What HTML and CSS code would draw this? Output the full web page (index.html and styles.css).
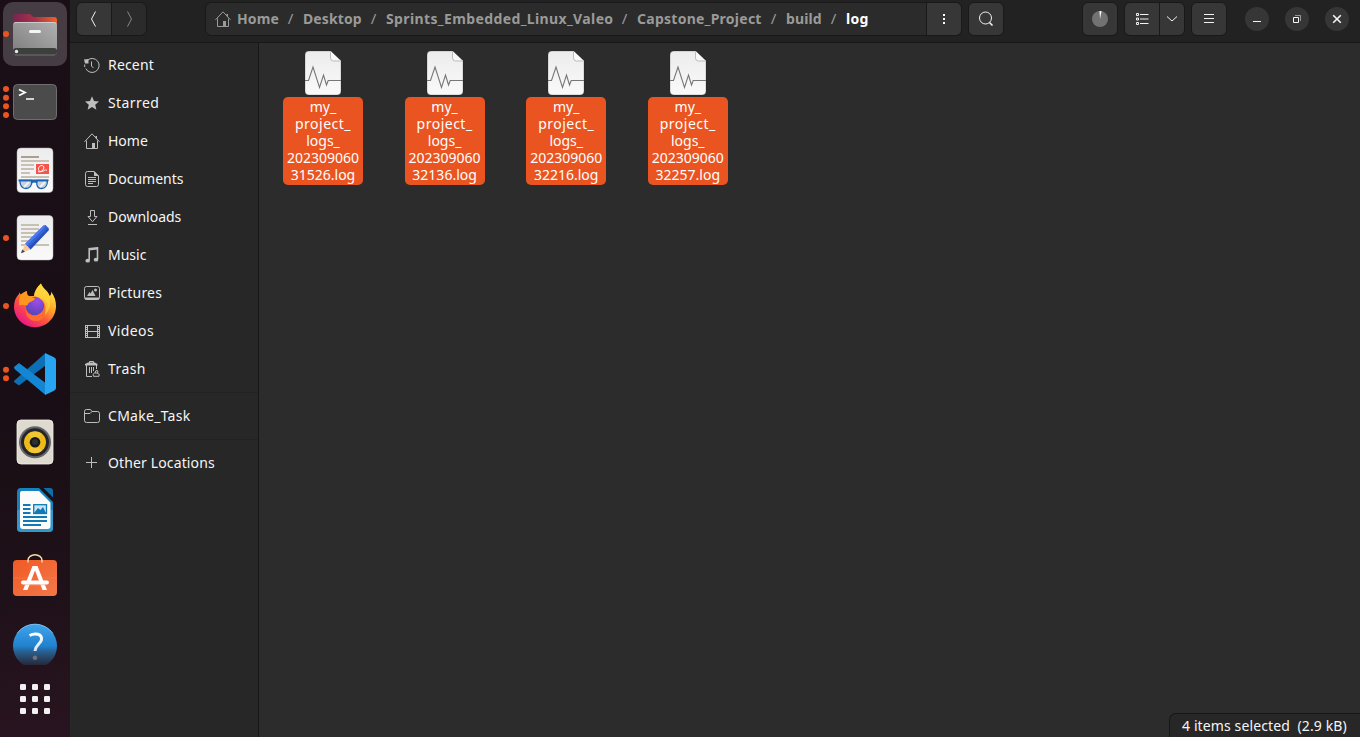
FILE: index.html
```html
<!DOCTYPE html>
<html lang="en">
<head>
<meta charset="utf-8">
<title>log</title>
<link rel="stylesheet" href="styles.css">
</head>
<body>
<svg width="0" height="0" class="defs">
  <defs>
    <linearGradient id="folder" x1="0" x2="1"><stop offset="0" stop-color="#7a2350"/><stop offset=".5" stop-color="#a8324a"/><stop offset="1" stop-color="#f0622a"/></linearGradient>
    <linearGradient id="drawer" x1="0" x2="1" y1="1" y2="0"><stop offset="0" stop-color="#7d7d7d"/><stop offset="1" stop-color="#b0b0b0"/></linearGradient>
    <linearGradient id="paper" x1="0" x2="0" y1="0" y2="1"><stop offset="0" stop-color="#ececec"/><stop offset="1" stop-color="#fafafa"/></linearGradient>
    <linearGradient id="fox" x1=".85" x2=".2" y1=".1" y2=".95"><stop offset="0" stop-color="#ffe93f"/><stop offset=".35" stop-color="#ffa42b"/><stop offset=".6" stop-color="#ff5a36"/><stop offset="1" stop-color="#e8128d"/></linearGradient>
    <radialGradient id="globe" cx=".6" cy=".25" r=".8"><stop offset="0" stop-color="#a14bea"/><stop offset="1" stop-color="#5045b5"/></radialGradient>
    <linearGradient id="bag" x1="0" x2="1" y1="0" y2="1"><stop offset="0" stop-color="#f05a24"/><stop offset="1" stop-color="#f3784a"/></linearGradient>
    <linearGradient id="help" x1="0" x2="0" y1="0" y2="1"><stop offset="0" stop-color="#3fa3ec"/><stop offset=".5" stop-color="#2182d0"/><stop offset=".62" stop-color="#286293"/><stop offset=".92" stop-color="#262a3b"/></linearGradient>
    <linearGradient id="mark" x1="0" x2="0" y1="0" y2="1"><stop offset="0" stop-color="#fff"/><stop offset="1" stop-color="#d5e4f0"/></linearGradient>
    <symbol id="logfile" viewBox="0 0 38 46">
      <path d="M5 1h21.500l10.500 10V41a4 4 0 0 1-4 4H5a4 4 0 0 1-4-4V5a4 4 0 0 1 4-4z" fill="url(#paper)" stroke="#1e1e1e" stroke-opacity=".4" stroke-width=".6"/>
      <path d="M26.500 1v7a3 3 0 0 0 3 3H37z" fill="#f8f8f8"/>
      <path d="M26.500 1.500V8a3 3 0 0 0 3 3h7" fill="none" stroke="#bcbcbc" stroke-width="1"/>
      <path d="M1 30.500h3.500L9 17l6.500 20.500 4-12.500 3 10 1.700-4.500H37" fill="none" stroke="#777" stroke-width="1.100"/>
    </symbol>
    <symbol id="house" viewBox="0 0 16 16">
      <path d="M.5 8.800 8 .8l7.500 8M2.500 7.500v8H13.500v-8" fill="none" stroke="currentColor" stroke-width="1"/>
      <path d="M8 10h3v5.500H8zM11.500 3H13v3.500L11.500 5z" fill="currentColor"/>
    </symbol>
  </defs>
</svg>
<div class="desktop">
  <nav class="dock">
    <div class="dock-list">
      <svg class="app" viewBox="0 0 70 68">
        <rect x="3" y="2" width="64" height="64" rx="10" fill="#463c43"/>
        <path d="M13 27V17a3 3 0 0 1 3-3h14l3.500 3H54a3 3 0 0 1 3 3v9z" fill="url(#folder)"/>
        <rect x="13" y="22" width="44" height="33" rx="3" fill="url(#drawer)"/>
        <path d="M14 23.500q.8-1 2-1h38q1.200 0 2 1" fill="none" stroke="#d5d5d5" stroke-width=".8"/>
        <rect x="13" y="48" width="44" height="7" rx="3" fill="#3c3f3d"/>
        <path d="M15 55h40" stroke="#8a8a8a" stroke-width=".7"/>
        <rect x="29" y="30" width="12" height="3" rx="1.500" fill="#f5f5f5"/>
        <circle cx="16.500" cy="51.500" r="1.700" fill="#e8e8e8"/>
        <circle cx="6" cy="34" r="3" fill="#e95420"/>
      </svg>
      <svg class="app" viewBox="0 0 70 68">
        <rect x="13.500" y="16.500" width="43" height="35" rx="4" fill="#4b4b4b" stroke="#6e6e6e"/>
        <path d="m19 21.500 6 3-6 3" fill="none" stroke="#fff" stroke-width="1.800"/><path d="M26 31h8" stroke="#fff" stroke-width="1.500"/>
        <g fill="#e95420"><circle cx="6" cy="21" r="3"/><circle cx="6" cy="29.700" r="3"/><circle cx="6" cy="38.300" r="3"/><circle cx="6" cy="47" r="3"/></g>
      </svg>
      <svg class="app" viewBox="0 0 70 68">
        <rect x="17" y="12" width="36" height="44.500" rx="4" fill="url(#paper)" stroke="#aaa" stroke-width=".5"/>
        <path d="M21 21h18" stroke="#aaa08c" stroke-width="2"/>
        <path d="M21 25h28M21 29h13M21 33h13M21 37h9M21 41h28" stroke="#c6c1b4" stroke-width="2"/>
        <rect x="36" y="28" width="13" height="10" fill="#f4544c"/>
        <path d="M38 35.500c5 2 8-6 4-6s-5 6-1 6 4-3 6-1" fill="none" stroke="#fff" stroke-width="1"/>
        <path d="M19.800 44.500h11.700c1 5-2 8-5.500 8s-6-3-6.200-8zM37 44.500h10.500c0 5-2.500 8-6 8S36 50 37 44.500z" fill="#b9c4d0" fill-opacity=".75" stroke="#1b63b5" stroke-width="1.300"/>
        <path d="m24 51 5-5M40 51l5-5" stroke="#eef2f6" stroke-width="2"/>
        <path d="M18.500 44.300h30M31.500 46.500q3-2 5.500 0" fill="none" stroke="#1b63b5" stroke-width="1.800"/>
      </svg>
      <svg class="app" viewBox="0 0 70 68">
        <rect x="17" y="11.500" width="36" height="44.500" rx="4" fill="url(#paper)" stroke="#bbb" stroke-width=".5"/>
        <path d="M21 21h18M21 25h18M21 29h17M21 33h13M21 37h9M21 41h28" stroke="#c6c1b4" stroke-width="1.800"/>
        <path d="m25 40 18.500-18.500 2-.5 3.500 3.500-.5 2L30.500 45.500z" fill="#3463d8"/>
        <path d="m25 40 18.500-18.500 1.500 1.500-18.200 18.700z" fill="#4c7af0"/>
        <path d="m28.500 43.500 19-19 1.200 1.500-18.200 19.500z" fill="#2750b8"/>
        <path d="m21.500 48.500 3.500-8.500 5.500 5.500z" fill="#fac999"/><path d="m21 49.200 1.300-3.700 2.700 2.300z" fill="#444"/>
        <circle cx="6" cy="34" r="3" fill="#e95420"/>
      </svg>
      <svg class="app" viewBox="0 0 70 68">
        <path d="M41 11.500c1 4.500 7 7 8.500 12.500 1.500-1 2-2.500 1.500-4.500C54.500 24 56 29 56 34c0 12-9.500 21.200-21 21.200S14 46 14 34.500c0-5.500 2-9.500 5-12.500l.5-2c.3 1.500 1 2.500 2 3 1.500-1.500 3-3 5.500-4-.3 2.500.5 4.500 2 5h5c.5-5 3-9 7-12.500z" fill="url(#fox)"/>
        <circle cx="35" cy="34" r="9.300" fill="url(#globe)"/>
        <path d="M20.500 22.500c2-1.500 4-2.700 6-3.300-.3 3 .8 4.500 2.500 5l6 2c0 3-7 3.500-7 6 0 1-2 2-5 .5l-4 .5c0-4 0-7 1.500-10.700z" fill="#ff961d"/>
        <path d="M26 34c-1 7 5 11 11 9 5-2 8-6 7-11-1-3-2-4-5-5 4-1 9 2 9.500 8S43 49 36 49s-12-6-10-15z" fill="#ff6c2f"/>
        <path d="M41 11.500c1 4.500 7 7 8.500 12.500 2 7 0 15-4.500 19 1-5 1-12-3-15-3-3-7-4.500-8-4 .5-5 3-9 7-12.500z" fill="#ffd83c" fill-opacity=".75"/>
        <circle cx="6" cy="34" r="3" fill="#e95420"/>
      </svg>
      <svg class="app" viewBox="0 0 70 68">
        <path d="m14 42 5 3.500 26.500-20V13L14.500 40.500z" fill="#0d6fb4"/>
        <path d="m14 27 5-4 26.500 20V55L14.500 29z" fill="#1487d4"/>
        <path d="m45 13 8.500 4q2.500 1 2.500 3v28q0 2-2.500 3L45 55z" fill="#27a4f2"/>
        <g fill="#e95420"><circle cx="6" cy="29.700" r="3"/><circle cx="6" cy="38.300" r="3"/></g>
      </svg>
      <svg class="app" viewBox="0 0 70 68">
        <rect x="17" y="12" width="36" height="44" rx="4" fill="#dedacf" stroke="#f3f1eb" stroke-width=".8"/>
        <circle cx="35" cy="34.300" r="16" fill="#66666b"/><circle cx="35" cy="34.300" r="14" fill="#25252c"/>
        <circle cx="35" cy="34.300" r="11" fill="#ecbb18"/><path d="M35 34.300 28 26a11 11 0 0 1 14 0zM35 34.300l-7 8.500a11 11 0 0 0 14 0z" fill="#f6ce4a" fill-opacity=".6"/>
        <circle cx="35" cy="34.300" r="5.300" fill="#17181b"/><circle cx="35" cy="34" r="3" fill="#2d3033"/>
      </svg>
      <svg class="app" viewBox="0 0 70 68">
        <path d="M21 12h18l14 14v26a4 4 0 0 1-4 4H21a4 4 0 0 1-4-4V16a4 4 0 0 1 4-4z" fill="#1581bd"/>
        <path d="M17 34h36v18a4 4 0 0 1-4 4H21a4 4 0 0 1-4-4z" fill="#3197cc"/>
        <path d="M22 15h17l11.500 11.500V50a3 3 0 0 1-3 3H23a3 3 0 0 1-3-3V17a2 2 0 0 1 2-2z" fill="#fbfbfb"/>
        <path d="M43.500 12H50q3 0 3 3v6.500z" fill="#116ca4"/>
        <path d="M23 29h7.500M23 33h7.500M23 37h7.500M23 41h24M23 45h24M23 49h18" stroke="#1279b5" stroke-width="1.800"/>
        <rect x="33.700" y="28.700" width="12.800" height="8.800" fill="#c7e6f6" stroke="#1279b5" stroke-width="1.300"/>
        <path d="m34 37 4-5 2.500 2 2.500-3 3 6z" fill="#1279b5"/>
      </svg>
      <svg class="app" viewBox="0 0 70 68">
        <rect x="13" y="16" width="44" height="36" rx="4" fill="url(#bag)"/>
        <path d="M13.500 34H56.500" stroke="#f58152" stroke-width=".6"/>
        <path d="M28 18.500V16.500a7 5.800 0 0 1 14 0v2" fill="none" stroke="#f4dba5" stroke-width="1.500"/>
        <path d="M32.500 22h5L47 46h-4.500L35 26.500 27.500 46H23z" fill="#fff"/>
        <path d="M23 38.500h24" stroke="#fff" stroke-width="4" stroke-linecap="round"/>
        <path d="M25 40.800h20" stroke="#f6b49a" stroke-width=".7"/>
      </svg>
      <svg class="app" viewBox="0 0 70 68">
        <circle cx="35" cy="34" r="22" fill="url(#help)"/>
        <path d="M17 21.500a22 22 0 0 1 36 0" fill="none" stroke="#8bd0ff" stroke-width=".8"/>
        <path d="M29.500 23.500c6-3 12.500-1.500 12 4-.5 4.500-6 5-6.500 11.500" fill="none" stroke="url(#mark)" stroke-width="3"/>
        <circle cx="35" cy="45.700" r="2.300" fill="#746f7c"/>
      </svg>
    </div>
    <svg class="grid-button" viewBox="0 0 31 31" fill="#f2f0f0">
      <g id="gridrow"><rect width="6" height="6" rx="1.300"/><rect x="12" width="6" height="6" rx="1.300"/><rect x="24" width="6" height="6" rx="1.300"/></g>
      <use href="#gridrow" y="12"/><use href="#gridrow" y="24"/>
    </svg>
  </nav>

  <main class="window">
    <header class="header">
      <div class="group nav-group">
        <span class="btn"><svg width="16" height="18" viewBox="0 0 16 18"><path d="M9.500 1.500 5.500 9l4 7.500" class="line"/></svg></span>
        <span class="btn off"><svg width="16" height="18" viewBox="0 0 16 18"><path d="m6.500 1.500 4 7.500-4 7.500" class="line"/></svg></span>
      </div>
      <div class="group path-group">
        <div class="path">
          <svg width="16" height="16" class="path-home"><use href="#house"/></svg>
          <span class="crumb c-home">Home</span><i>/</i>
          <span class="crumb c-desk">Desktop</span><i>/</i>
          <span class="crumb c-sprints">Sprints_Embedded_Linux_Valeo</span><i>/</i>
          <span class="crumb c-cap">Capstone_Project</span><i>/</i>
          <span class="crumb c-build">build</span><i>/</i>
          <span class="crumb current">log</span>
        </div>
        <span class="btn"><svg width="16" height="16" viewBox="0 0 16 16" fill="#fff"><path d="M7 3h2v2H7zM7 7h2v2H7zM7 11h2v2H7z"/></svg></span>
      </div>
      <div class="group"><span class="btn"><svg width="16" height="16" viewBox="0 0 16 16"><circle cx="7.500" cy="7" r="6" class="line"/><path d="m11.500 11.500 3 3" class="line thick"/></svg></span></div>
      <div class="group progress"><span class="btn"><svg width="16" height="16" viewBox="0 0 16 16"><circle cx="8" cy="8" r="8" fill="#727272"/><path d="M8 8 7.500 0h2z" fill="#fff"/></svg></span></div>
      <div class="group view">
        <span class="btn"><svg width="14" height="14" viewBox="0 0 14 14"><path d="M1.500 1.500h2v2h-2zM1.500 6h2v2h-2zM1.500 10.500h2v2h-2zM5 2.500h8.500M5 7h8.500M5 11.500h8.500" class="line"/></svg></span>
        <span class="btn narrow"><svg width="12" height="10" viewBox="0 0 12 10"><path d="m1 2.500 5 4.500 5-4.500" class="line"/></svg></span>
      </div>
      <div class="group menu"><span class="btn"><svg width="12" height="12" viewBox="0 0 12 12"><path d="M1 1.500h10M1 5.500h10M1 9.500h10" class="line"/></svg></span></div>
      <div class="controls">
        <span class="round"><svg width="10" height="10" viewBox="0 0 10 10"><path d="M1 7.500h8" class="line"/></svg></span>
        <span class="round"><svg width="10" height="10" viewBox="0 0 10 10"><path d="M3 1.500h5.500V7" class="line dim"/><path d="M1.500 3.500h5v5h-5z" class="line"/></svg></span>
        <span class="round"><svg width="10" height="10" viewBox="0 0 10 10"><path d="m1.200 1.200 7.600 7.600M8.800 1.200 1.200 8.800" class="line thick"/></svg></span>
      </div>
    </header>

    <div class="body">
      <aside class="sidebar">
        <a class="place"><svg viewBox="0 0 16 16"><path d="M3.500 3.200A7 7 0 1 1 1.800 11.500M.7 10V7.500M7.500 4.500V9L9.500 11" class="line"/><path d="M0 2.500 4.500 2v4.500H1z" fill="currentColor"/></svg><span class="w2">Recent</span></a>
        <a class="place"><svg viewBox="0 0 16 16"><path d="m8 1.200 2 4.800 5 .4-3.800 3.300 1.200 5L8 12l-4.400 2.700 1.200-5L1 6.400 6 6z" fill="currentColor"/></svg><span class="w4">Starred</span></a>
        <a class="place"><svg><use href="#house"/></svg><span>Home</span></a>
        <a class="place"><svg viewBox="0 0 16 16"><path d="M3.500.5H10l4.500 4.500v8.500a2 2 0 0 1-2 2h-9a2 2 0 0 1-2-2v-11a2 2 0 0 1 2-2zM4 6.500h8M4 8.500h8M4 10.500h8M4 12.500h5" class="line"/><path d="M10 0v5h5z" fill="currentColor"/></svg><span>Documents</span></a>
        <a class="place"><svg viewBox="0 0 16 16"><path d="M6.500 1.500h4v6H13l-4.500 5.200L4 7.500h2.500zM4 15.500h9" class="line"/></svg><span>Downloads</span></a>
        <a class="place"><svg viewBox="0 0 16 16"><path d="M5.200 13V1.700l8.300-.9V12M5 2.700l8.500-.9" class="line thick"/><ellipse cx="3.700" cy="13.700" rx="2.300" ry="1.900" fill="currentColor"/><ellipse cx="12" cy="12.700" rx="2.300" ry="1.900" fill="currentColor"/></svg><span>Music</span></a>
        <a class="place"><svg viewBox="0 0 16 16"><rect x=".5" y="1.500" width="15" height="13" rx="2" class="line"/><path d="M1 12.500h14v2H1zM3 11l2.500-4 1.200 1.500L8.500 5l3 6z" fill="currentColor"/><circle cx="11.500" cy="5" r="1.500" fill="currentColor"/></svg><span class="w2">Pictures</span></a>
        <a class="place"><svg viewBox="0 0 16 16"><path d="M1.500 2v13M3.500 2v13M13.500 2v13M15.500 2v13M3 2.500h11M3 8.500h11M3 14.500h11" class="line"/><path d="M2.500 2v13M14.500 2v13" class="line film"/></svg><span class="w4">Videos</span></a>
        <a class="place"><svg viewBox="0 0 16 16"><path d="M1 4.500V3l3-1.500h7L13.500 3v1.500z" fill="currentColor"/><path d="M5.500 2V.5h4V2M2.500 4v11.500H8M12.500 4v4M5.500 6v6M7.500 6v6M9.500 6v4" class="line"/><path d="M9.500 15.300q-1.500-2 1-3.300h2.500q3.500 1 2 3.300zM11 12l1-2.500 2 .5-.5 2" class="line"/></svg><span class="w4">Trash</span></a>
        <hr>
        <a class="place"><svg viewBox="0 0 16 16"><path d="M.5 12.500v-9a2 2 0 0 1 2-2h4l1.500 2h5.500a2 2 0 0 1 2 2v7a2 2 0 0 1-2 2h-11a2 2 0 0 1-2-2zM.5 5.500H6L8 3.500" class="line"/></svg><span class="w3">CMake_Task</span></a>
        <hr>
        <a class="place"><svg viewBox="0 0 16 16"><path d="M2 7.500h11M7.500 2v11" class="line"/></svg><span class="w1">Other Locations</span></a>
      </aside>
      <section class="files">
        <figure class="file"><svg><use href="#logfile"/></svg><figcaption>my_<br><b>project_</b><br>logs_<br>202309060<br>31526.log</figcaption></figure>
        <figure class="file"><svg><use href="#logfile"/></svg><figcaption>my_<br><b>project_</b><br>logs_<br>202309060<br>32136.log</figcaption></figure>
        <figure class="file"><svg><use href="#logfile"/></svg><figcaption>my_<br><b>project_</b><br>logs_<br>202309060<br>32216.log</figcaption></figure>
        <figure class="file"><svg><use href="#logfile"/></svg><figcaption>my_<br><b>project_</b><br>logs_<br>202309060<br>32257.log</figcaption></figure>
      </section>
      <div class="status">4 items selected&nbsp; (2.9 kB)</div>
    </div>
  </main>
</div>
</body>
</html>
```
FILE: styles.css
```css
* { box-sizing: border-box; }
body {
  margin: 0;
  font: 14px/17px "Noto Sans", sans-serif;
  color: #f5f5f5;
  background: #2c2c2c;
  overflow: hidden;
}
svg { display: block; flex: none; }
.defs { position: absolute; }
.desktop { display: flex; width: 1360px; height: 737px; }

.dock {
  width: 70px;
  flex: none;
  display: flex;
  flex-direction: column;
  align-items: center;
  background: linear-gradient(170deg, #1b0f17 0%, #190e15 55%, #1f1119 80%, #281420 100%);
}
.dock-list { height: 665px; overflow: hidden; }
.app { width: 70px; height: 68px; }
.grid-button { width: 31px; height: 31px; margin-top: 19px; }

.window { flex: 1; display: flex; flex-direction: column; min-width: 0; }
.header {
  height: 43px;
  flex: none;
  display: flex;
  padding: 2px 11px 0 6px;
  background: #222;
  border-bottom: 1px solid #171717;
}
.group {
  display: flex;
  height: 34px;
  border: 1px solid #191919;
  border-radius: 6px;
  overflow: hidden;
  background: #191919;
  gap: 1px;
  color: #f2f2f2;
}
.btn {
  width: 34px;
  display: flex;
  align-items: center;
  justify-content: center;
  background: #373737;
}
.btn.narrow { width: 24px; }
.btn.off { background: #2b2b2b; color: #888; }
.line { fill: none; stroke: currentColor; stroke-width: 1; }
.thick { stroke-width: 1.6; }
.dim { opacity: .5; }
.film { stroke-dasharray: 1 1; }

.path-group { margin-left: 58px; width: 757px; margin-right: 6px; }
.path {
  flex: 1;
  display: flex;
  align-items: center;
  padding-left: 9px;
  background: #2b2b2b;
  color: #9a9a98;
  font-weight: 700;
  white-space: nowrap;
}
.path-home { margin-right: 6px; }
.path i { width: 24px; padding-right: 1px; text-align: center; font-style: normal; font-weight: 400; font-size: 15px; }
.crumb, .path i { padding-bottom: 2px; }
.c-home { width: 42px; letter-spacing: .1px; }
.c-desk { width: 59px; letter-spacing: .1px; }
.c-sprints { width: 227px; letter-spacing: .38px; }
.c-cap { width: 125px; letter-spacing: .26px; }
.c-build { width: 36px; letter-spacing: .1px; }
.current { color: #fff; letter-spacing: .3px; }

.progress { margin-left: auto; }
.view { margin: 0 6px; }
.controls { display: flex; gap: 16px; margin: 5px 0 0 18px; }
.round {
  width: 24px;
  height: 24px;
  border-radius: 50%;
  display: flex;
  align-items: center;
  justify-content: center;
  background: #363636;
}

.body { flex: 1; display: flex; position: relative; min-height: 0; }
.sidebar {
  width: 189px;
  flex: none;
  padding-top: 3px;
  background: #272727;
  border-right: 1px solid #171717;
}
.place {
  height: 38px;
  display: flex;
  align-items: center;
  gap: 8px;
  padding-left: 14px;
}
.place svg { width: 16px; height: 16px; color: #bebebe; }
.place span { padding-bottom: 2px; }
.w1 { letter-spacing: .13px; }
.w2 { letter-spacing: .18px; }
.w3 { letter-spacing: .28px; }
.w4 { letter-spacing: .4px; }
.sidebar hr { height: 1px; margin: 4px 0; border: 0; background: #222; }

.files { display: flex; align-items: flex-start; padding: 7px 0 0 24px; gap: 41.6px; }
.file { width: 80px; margin: 0; display: flex; flex-direction: column; align-items: center; }
.file svg { width: 38px; height: 46px; }
.file figcaption {
  width: 80px;
  height: 88px;
  margin-top: 1px;
  padding-top: 1px;
  border-radius: 5px;
  background: #e95420;
  color: #fff;
  text-align: center;
}
.file b { font-weight: 400; letter-spacing: .5px; }
.status {
  position: absolute;
  right: 0;
  bottom: 0;
  width: 191px;
  height: 24px;
  padding: 3px 0 0 12px;
  border: 1px solid #171717;
  border-width: 1px 0 0 1px;
  border-radius: 7px 0 0 0;
  background: #272727;
  letter-spacing: .12px;
  white-space: nowrap;
}
```
